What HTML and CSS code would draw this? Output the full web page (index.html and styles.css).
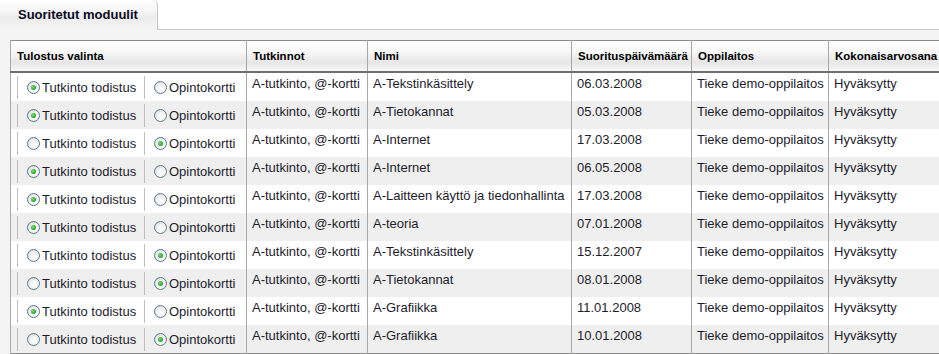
FILE: index.html
```html
<!DOCTYPE html>
<html>
<head>
<meta charset="utf-8">
<link rel="stylesheet" href="styles.css">
</head>
<body>
<div class="tabs">
  <div class="tab">Suoritetut moduulit</div>
  <div class="tab-rest"></div>
</div>
<div class="panel">
  <table class="grid">
    <colgroup>
      <col class="c1"><col class="c2"><col class="c3"><col class="c4"><col class="c5"><col class="c6">
    </colgroup>
    <thead>
      <tr><th>Tulostus valinta</th><th>Tutkinnot</th><th>Nimi</th><th>Suorituspäivämäärä</th><th>Oppilaitos</th><th>Kokonaisarvosana</th></tr>
    </thead>
    <tbody>
      <tr>
        <td class="sel"><div class="choice"><span class="opt"><span class="radio on"></span>Tutkinto todistus</span><span class="opt"><span class="radio"></span>Opintokortti</span></div></td>
        <td>A-tutkinto, @-kortti</td><td>A-Tekstinkäsittely</td><td>06.03.2008</td><td>Tieke demo-oppilaitos</td><td>Hyväksytty</td>
      </tr>
      <tr class="alt">
        <td class="sel"><div class="choice"><span class="opt"><span class="radio on"></span>Tutkinto todistus</span><span class="opt"><span class="radio"></span>Opintokortti</span></div></td>
        <td>A-tutkinto, @-kortti</td><td>A-Tietokannat</td><td>05.03.2008</td><td>Tieke demo-oppilaitos</td><td>Hyväksytty</td>
      </tr>
      <tr>
        <td class="sel"><div class="choice"><span class="opt"><span class="radio"></span>Tutkinto todistus</span><span class="opt"><span class="radio on"></span>Opintokortti</span></div></td>
        <td>A-tutkinto, @-kortti</td><td>A-Internet</td><td>17.03.2008</td><td>Tieke demo-oppilaitos</td><td>Hyväksytty</td>
      </tr>
      <tr class="alt">
        <td class="sel"><div class="choice"><span class="opt"><span class="radio on"></span>Tutkinto todistus</span><span class="opt"><span class="radio"></span>Opintokortti</span></div></td>
        <td>A-tutkinto, @-kortti</td><td>A-Internet</td><td>06.05.2008</td><td>Tieke demo-oppilaitos</td><td>Hyväksytty</td>
      </tr>
      <tr>
        <td class="sel"><div class="choice"><span class="opt"><span class="radio on"></span>Tutkinto todistus</span><span class="opt"><span class="radio"></span>Opintokortti</span></div></td>
        <td>A-tutkinto, @-kortti</td><td>A-Laitteen käyttö ja tiedonhallinta</td><td>17.03.2008</td><td>Tieke demo-oppilaitos</td><td>Hyväksytty</td>
      </tr>
      <tr class="alt">
        <td class="sel"><div class="choice"><span class="opt"><span class="radio on"></span>Tutkinto todistus</span><span class="opt"><span class="radio"></span>Opintokortti</span></div></td>
        <td>A-tutkinto, @-kortti</td><td>A-teoria</td><td>07.01.2008</td><td>Tieke demo-oppilaitos</td><td>Hyväksytty</td>
      </tr>
      <tr>
        <td class="sel"><div class="choice"><span class="opt"><span class="radio"></span>Tutkinto todistus</span><span class="opt"><span class="radio on"></span>Opintokortti</span></div></td>
        <td>A-tutkinto, @-kortti</td><td>A-Tekstinkäsittely</td><td>15.12.2007</td><td>Tieke demo-oppilaitos</td><td>Hyväksytty</td>
      </tr>
      <tr class="alt">
        <td class="sel"><div class="choice"><span class="opt"><span class="radio"></span>Tutkinto todistus</span><span class="opt"><span class="radio on"></span>Opintokortti</span></div></td>
        <td>A-tutkinto, @-kortti</td><td>A-Tietokannat</td><td>08.01.2008</td><td>Tieke demo-oppilaitos</td><td>Hyväksytty</td>
      </tr>
      <tr>
        <td class="sel"><div class="choice"><span class="opt"><span class="radio on"></span>Tutkinto todistus</span><span class="opt"><span class="radio"></span>Opintokortti</span></div></td>
        <td>A-tutkinto, @-kortti</td><td>A-Grafiikka</td><td>11.01.2008</td><td>Tieke demo-oppilaitos</td><td>Hyväksytty</td>
      </tr>
      <tr class="alt">
        <td class="sel"><div class="choice"><span class="opt"><span class="radio"></span>Tutkinto todistus</span><span class="opt"><span class="radio on"></span>Opintokortti</span></div></td>
        <td>A-tutkinto, @-kortti</td><td>A-Grafiikka</td><td>10.01.2008</td><td>Tieke demo-oppilaitos</td><td>Hyväksytty</td>
      </tr>
    </tbody>
  </table>
</div>
</body>
</html>
```

FILE: styles.css
```css
html, body {
  margin: 0;
  padding: 0;
  background: #ffffff;
  overflow: hidden;
  font-family: "Liberation Sans", Arial, sans-serif;
}

.tabs {
  display: flex;
  height: 30px;
}

.tab {
  width: 139px;
  height: 30px;
  padding-left: 18px;
  box-sizing: content-box;
  font-size: 13px;
  font-weight: bold;
  color: #0a0a1e;
  line-height: 30px;
  background: linear-gradient(to bottom, #ffffff 0%, #f8f8f8 30%, #ececec 60%, #f2f2f2 85%, #f4f4f4 100%);
  border-right: 1px solid #c4c4c4;
  border-top-right-radius: 6px;
}

.tab-rest {
  flex: 1;
  border-bottom: 1px solid #c4c4c4;
}

.panel {
  background: #f4f4f4;
  padding: 10px 0 0 10px;
  height: 320px;
}

.grid {
  border-collapse: collapse;
  table-layout: fixed;
  width: 940px;
  border: 1px solid #8c8c8c;
  background: #ffffff;
}

.c1 { width: 236px; }
.c2 { width: 121px; }
.c3 { width: 204px; }
.c4 { width: 120px; }
.c5 { width: 137px; }
.c6 { width: 122px; }

.grid th {
  height: 30px;
  padding: 0 5px 0 6px;
  text-align: left;
  font-size: 11.5px;
  font-weight: bold;
  color: #000;
  white-space: nowrap;
  overflow: hidden;
  border-left: 1px solid #a8a8a8;
  border-bottom: 2px solid #6e6e6e;
  background: linear-gradient(to bottom, #ffffff 0%, #f7f7f7 35%, #e6e6e6 70%, #f2f2f2 90%, #fafafa 100%);
}

.grid td {
  height: 28px;
  padding: 3px 4px 0 5px;
  vertical-align: top;
  font-size: 13px;
  line-height: 15px;
  color: #1c1c2c;
  white-space: nowrap;
  overflow: hidden;
  border-left: 1px solid #a8a8a8;
  box-sizing: border-box;
}

.grid tr.alt td {
  background: #efefef;
}

.grid td.sel {
  padding: 3px 0 2px 6px;
}

.choice {
  display: flex;
  height: 23px;
}

.opt {
  display: flex;
  align-items: center;
  flex: none;
  width: 127px;
  padding-left: 9px;
  border-left: 1px solid #bdbdbd;
  box-sizing: border-box;
}

.opt + .opt {
  flex: 1;
  width: auto;
}

.radio {
  width: 13px;
  height: 13px;
  box-sizing: border-box;
  border-radius: 50%;
  border: 1px solid #5a7895;
  background: radial-gradient(circle at 60% 65%, #ffffff 0%, #f2f2f2 45%, #d6d6d6 100%);
  margin-right: 2px;
  display: flex;
  align-items: center;
  justify-content: center;
  flex: none;
}

.radio.on::after {
  content: "";
  width: 5px;
  height: 5px;
  border-radius: 50%;
  background: radial-gradient(circle at 40% 40%, #7ee07a 0%, #28a828 60%, #1b8a1b 100%);
}
```
